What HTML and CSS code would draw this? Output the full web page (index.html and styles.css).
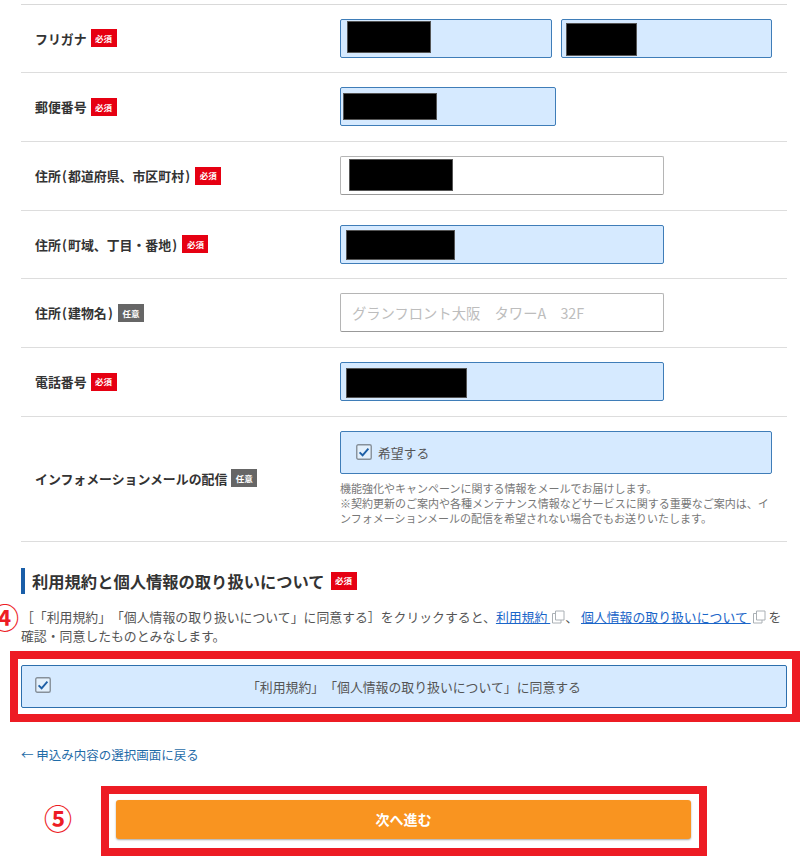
FILE: index.html
```html
<!DOCTYPE html>
<html lang="ja">
<head>
<meta charset="utf-8">
<title>お申込み</title>
<link rel="stylesheet" href="styles.css">
</head>
<body>
<main class="page">
  <section class="rows">
    <div class="row">
      <div class="label">フリガナ<span class="badge">必須</span></div>
      <div class="fields">
        <div class="input filled half-a"><span class="mask m1"></span></div>
        <div class="input filled half-b"><span class="mask m2"></span></div>
      </div>
    </div>
    <div class="row">
      <div class="label">郵便番号<span class="badge">必須</span></div>
      <div class="fields"><div class="input filled zip"><span class="mask m3"></span></div></div>
    </div>
    <div class="row">
      <div class="label"><span>住所<span class="paren">(</span>都道府県、市区町村<span class="paren">)</span></span><span class="badge">必須</span></div>
      <div class="fields"><div class="input wide"><span class="mask m4"></span></div></div>
    </div>
    <div class="row">
      <div class="label"><span>住所<span class="paren">(</span>町域、丁目・番地<span class="paren">)</span></span><span class="badge">必須</span></div>
      <div class="fields"><div class="input filled wide"><span class="mask m5"></span></div></div>
    </div>
    <div class="row">
      <div class="label"><span>住所<span class="paren">(</span>建物名<span class="paren">)</span></span><span class="badge optional">任意</span></div>
      <div class="fields"><div class="input wide placeholder">グランフロント大阪　タワーA　32F</div></div>
    </div>
    <div class="row">
      <div class="label">電話番号<span class="badge">必須</span></div>
      <div class="fields"><div class="input filled wide"><span class="mask m6"></span></div></div>
    </div>
    <div class="row tall">
      <div class="label">インフォメーションメールの配信<span class="badge optional">任意</span></div>
      <div class="mail">
        <div class="mail-check">
          <svg class="check" viewBox="0 0 16 16"><rect x="0.75" y="0.75" width="14.5" height="14.5" rx="1.5" fill="#e3f0fc" stroke="#86909a" stroke-width="1.4"/><path d="M3.6 8.4 6.6 11.3 12.4 4.6" fill="none" stroke="#1d5fa6" stroke-width="1.9"/></svg>
          <span>希望する</span>
        </div>
        <p class="help">機能強化やキャンペーンに関する情報をメールでお届けします。<br>※契約更新のご案内や各種メンテナンス情報などサービスに関する重要なご案内は、インフォメーションメールの配信を希望されない場合でもお送りいたします。</p>
      </div>
    </div>
  </section>

  <section class="terms">
    <h2 class="heading">利用規約と個人情報の取り扱いについて<span class="badge">必須</span></h2>
    <p class="intro"><span class="step-4">④</span>［「利用規約」「個人情報の取り扱いについて」に同意する］をクリックすると、<a href="#">利用規約&nbsp;</a><svg class="ext" viewBox="0 0 14 14"><path d="M4.5 1h8.5v9H4.5z" fill="#fff" stroke="#aab0b5"/><path d="M4.5 3.5H1.5V13h8.5v-3" fill="none" stroke="#aab0b5"/></svg>、 <a href="#">個人情報の取り扱いについて&nbsp;</a><svg class="ext" viewBox="0 0 14 14"><path d="M4.5 1h8.5v9H4.5z" fill="#fff" stroke="#aab0b5"/><path d="M4.5 3.5H1.5V13h8.5v-3" fill="none" stroke="#aab0b5"/></svg> を確認・同意したものとみなします。</p>
    <div class="consent">
      <svg class="check consent-check" viewBox="0 0 16 16"><rect x="0.75" y="0.75" width="14.5" height="14.5" rx="1.5" fill="#e3f0fc" stroke="#86909a" stroke-width="1.4"/><path d="M3.6 8.4 6.6 11.3 12.4 4.6" fill="none" stroke="#1d5fa6" stroke-width="1.9"/></svg>
      <span>「利用規約」「個人情報の取り扱いについて」に同意する</span>
      <span class="callout callout-consent"></span>
    </div>
    <a class="back" href="#">← 申込み内容の選択画面に戻る</a>
    <div class="next-wrap">
      <span class="step-5">⑤</span>
      <button class="next" type="button">次へ進む<span class="callout callout-next"></span></button>
    </div>
  </section>
</main>
</body>
</html>
```
FILE: styles.css
```css
* { box-sizing: border-box; }
html, body { margin: 0; padding: 0; background: #fff; }
body {
  font-family: "Noto Sans CJK JP", "Liberation Sans", sans-serif;
  color: #333;
  font-size: 13px;
  overflow: hidden;
  text-spacing-trim: space-all;
}
.page { width: 800px; height: 861px; padding: 3.5px 13px 0 21px; }
.rows { border-top: 1px solid #d9d9d9; }
.row {
  display: flex;
  align-items: center;
  height: 68.7px;
  padding-bottom: .3px;
  border-bottom: 1px solid #ddd;
}
.row.tall { height: 125px; }
.label {
  width: 319px;
  padding-left: 14px;
  font-weight: 700;
  font-size: 12.9px;
  display: flex;
  align-items: center;
  white-space: nowrap;
  color: #333;
}
.paren { padding: 0 1.2px; }
.badge {
  display: inline-flex;
  align-items: center;
  justify-content: center;
  width: 26px;
  height: 18px;
  margin-left: 4px;
  background: #e60012;
  color: #fff;
  font-size: 8.5px;
  font-weight: 700;
  line-height: 1;
}
.badge.optional { background: #666; }
.fields { display: flex; gap: 9px; }
.input {
  height: 39px;
  border: 1px solid #b5b5b5;
  border-bottom-color: #999;
  border-radius: 2px;
  background: #fff;
  position: relative;
}
.input.filled { background: #d6eaff; border-color: #3f7db8; }
.half-a { width: 212px; }
.half-b { width: 211px; }
.zip { width: 216px; }
.wide { width: 324px; }
.placeholder {
  display: flex;
  align-items: center;
  padding-left: 11px;
  font-size: 14.3px;
  color: #bdbdbd;
  white-space: nowrap;
}
.mask { position: absolute; background: #000; border: 1px solid #555; }
.m1 { left: 6px; top: 1px; width: 84px; height: 32px; }
.m2 { left: 4px; top: 3px; width: 71px; height: 33px; }
.m3 { left: 2px; top: 5px; width: 94px; height: 27px; }
.m4 { left: 8px; top: 2px; width: 104px; height: 32px; }
.m5 { left: 5px; top: 4px; width: 109px; height: 30px; }
.m6 { left: 5px; top: 5px; width: 121px; height: 30px; }
.mail { width: 432px; }
.mail-check {
  display: flex;
  align-items: center;
  gap: 6px;
  height: 43px;
  padding-left: 15px;
  background: #d6eaff;
  border: 1px solid #3f7db8;
  border-radius: 2px;
  font-size: 12.8px;
  color: #555;
}
.check { width: 16px; height: 16px; flex: none; display: block; }
.help {
  margin: 7px 0 0;
  font-size: 11px;
  line-height: 15px;
  color: #777;
}
.terms { padding-top: 26px; }
.heading {
  display: flex;
  align-items: center;
  height: 26px;
  margin: 0;
  padding-left: 7px;
  border-left: 4px solid #1a5ea8;
  font-size: 16.3px;
  font-weight: 700;
  color: #333;
  white-space: nowrap;
}
.heading .badge { margin-left: 6px; }
.intro {
  position: relative;
  margin: 13px 0 0;
  font-size: 12.87px;
  line-height: 19.5px;
  color: #555;
}
.intro a { color: #1b66c9; text-decoration: underline; }
.ext { width: 14px; height: 14px; margin-left: 1px; vertical-align: -2px; }
.step-4 {
  position: absolute;
  left: -30px;
  top: -7px;
  color: #ed1c24;
  font-size: 28px;
  font-weight: 700;
  line-height: 34px;
}
.consent {
  position: relative;
  display: flex;
  align-items: center;
  justify-content: center;
  height: 43px;
  margin-top: 19px;
  padding-left: 20px;
  background: #d6eaff;
  border: 1px solid #2d6fad;
  border-radius: 2px;
  font-size: 12.87px;
  color: #555;
}
.consent-check { position: absolute; left: 13px; top: 11px; }
.callout { position: absolute; border: 8px solid #ed1c24; pointer-events: none; }
.callout-consent { left: -12px; right: -14px; top: -15px; bottom: -15px; }
.back {
  display: block;
  margin-top: 38px;
  font-size: 12.5px;
  line-height: 18px;
  color: #1f6ca8;
  text-decoration: none;
}
.next-wrap { position: relative; margin: 36px 0 0 95px; width: 575px; }
.step-5 {
  position: absolute;
  left: -72px;
  top: 1px;
  color: #ed1c24;
  font-size: 28px;
  font-weight: 700;
  line-height: 34px;
}
.next {
  position: relative;
  display: block;
  width: 575px;
  height: 39px;
  border: 0;
  border-radius: 3px;
  background: #f99420;
  box-shadow: 0 1px 2px rgba(0,0,0,.35);
  color: #fff;
  font-family: inherit;
  font-size: 14px;
  font-weight: 700;
}
.callout-next { left: -15px; right: -16px; top: -14px; bottom: -17px; }
```
